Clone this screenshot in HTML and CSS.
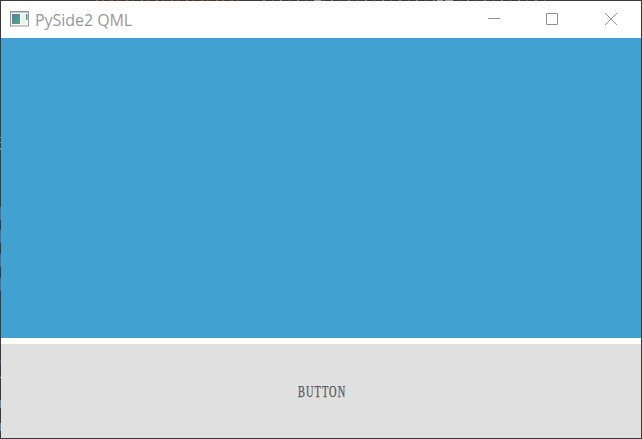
FILE: index.html
```html
<!DOCTYPE html>
<html lang="en">
<head>
<meta charset="utf-8">
<title>PySide2 QML</title>
<link rel="stylesheet" href="styles.css">
</head>
<body>
<div class="window">
  <header class="titlebar">
    <svg class="app-icon" width="19" height="16" viewBox="0 0 19 16">
      <defs><linearGradient id="pane" x1="0" y1="0" x2="1" y2="1"><stop offset="0" stop-color="#4b7fae"/><stop offset="1" stop-color="#59aa75"/></linearGradient></defs>
      <rect x=".5" y=".5" width="18" height="14.5" fill="#f8f8f8" stroke="#929699"/>
      <path d="M1 1.5h17" stroke="#c5c9cc"/>
      <rect x="2" y="3" width="8" height="10" fill="url(#pane)"/>
      <rect x="11" y="3" width="4" height="10" fill="#f0f1f2"/>
      <rect x="16" y="3" width="1.5" height="6" fill="url(#pane)"/>
    </svg>
    <h1 class="title">PySide2 QML</h1>
    <div class="controls">
      <svg width="12" height="12" viewBox="0 0 12 12"><path d="M0 5.5h12"/></svg>
      <svg width="12" height="12" viewBox="0 0 12 12"><path d="M.5 .5h11v11H.5z"/></svg>
      <svg class="close" width="12" height="12" viewBox="0 0 12 12"><path d="M0 0l12 12M12 0L0 12"/></svg>
    </div>
  </header>
  <main class="canvas"></main>
  <button class="action"><span class="label">BUTTON</span></button>
</div>
</body>
</html>
```
FILE: styles.css
```css
* { box-sizing: border-box; }
body {
  margin: 0;
  height: 439px;
  padding: 1px;
  overflow: hidden;
  background:
    linear-gradient(#888, #888) 0 137px / 1px 1px no-repeat,
    linear-gradient(#888, #888) 0 142px / 1px 1px no-repeat,
    linear-gradient(#888, #888) 0 148px / 1px 2px no-repeat,
    linear-gradient(#4a7184, #4a7184) 0 207px / 1px 13px no-repeat,
    linear-gradient(#4a7184, #4a7184) 0 230px / 1px 13px no-repeat,
    linear-gradient(#4a7184, #4a7184) 0 254px / 1px 13px no-repeat,
    linear-gradient(#4a7184, #4a7184) 0 278px / 1px 13px no-repeat,
    linear-gradient(#4681a8, #4681a8) 0 361px / 1px 1px no-repeat,
    linear-gradient(#999, #999) 0 377px / 1px 1px no-repeat,
    linear-gradient(#5f88a5, #5f88a5) 0 400px / 1px 8px no-repeat,
    linear-gradient(#5f88a5, #5f88a5) 0 423px / 1px 8px no-repeat,
    linear-gradient(#999, #999) 314px 0 / 7px 1px no-repeat,
    linear-gradient(#999, #999) 437px 0 / 6px 1px no-repeat,
    linear-gradient(#999, #999) 445px 0 / 8px 1px no-repeat,
    repeating-linear-gradient(90deg, #8c604f 0 2px, #3b393b 2px 6px, #6c5449 6px 8px, #3b393b 8px 15px) 96px 0 / 143px 1px no-repeat,
    repeating-linear-gradient(90deg, #6d8293 0 2px, #3b393b 2px 9px, #80705b 9px 10px, #3b393b 10px 17px) 263px 0 / 285px 1px no-repeat,
    #3b393b;
}
.window {
  display: flex;
  flex-direction: column;
  height: 437px;
  background: #fff;
}
.titlebar {
  display: flex;
  align-items: center;
  height: 37px;
  padding: 0 24px 0 9px;
}
.app-icon { display: block; margin-top: -1px; }
.title {
  margin: 0 0 0 6px;
  font: 400 16px/22px "Open Sans", "Noto Sans", sans-serif;
  letter-spacing: -.05px;
  color: #999;
}
.controls {
  display: flex;
  gap: 46px;
  margin-left: auto;
  margin-top: -1px;
}
.controls svg { fill: none; stroke: #929292; stroke-width: 1; }
.controls .close { margin-left: 1px; }
.canvas { height: 300px; background: #41a2d1; }
.action {
  display: flex;
  align-items: center;
  justify-content: center;
  height: 94px;
  margin-top: 6px;
  padding: 2px 0 0;
  border: 0;
  background: #e0e0e0;
  color: #555;
}
.label {
  font: 400 16px/20px "Liberation Serif", serif;
  letter-spacing: 1.6px;
  margin-right: -1.6px;
  transform: scaleX(.65);
  -webkit-text-stroke: .25px #555;
}
```
